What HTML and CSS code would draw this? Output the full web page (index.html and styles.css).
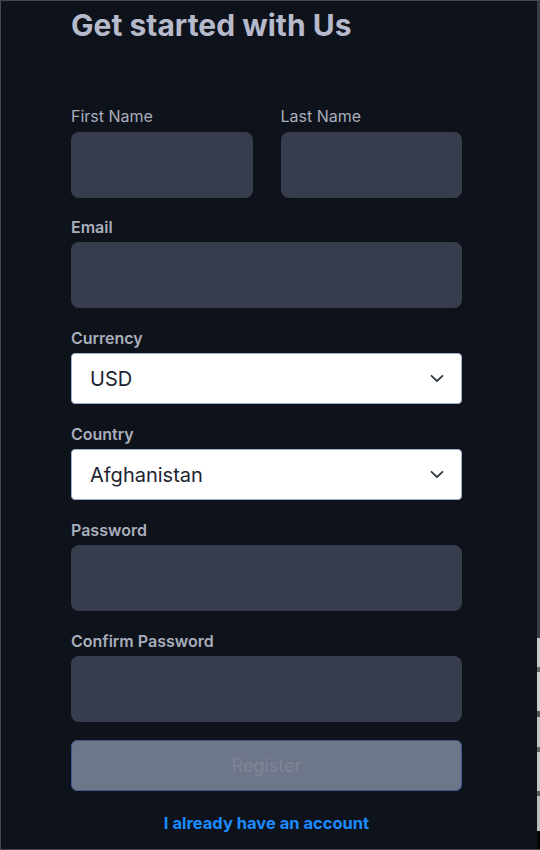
FILE: index.html
```html
<!DOCTYPE html>
<html lang="en">
<head>
<meta charset="utf-8">
<title>Get started with Us</title>
<link rel="stylesheet" href="styles.css">
</head>
<body>
<div class="frame">
  <main class="page">
    <h1 class="title">Get started with Us</h1>
    <form class="form">
      <div class="row">
        <div class="field">
          <label class="label light">First Name</label>
          <div class="input"></div>
        </div>
        <div class="field">
          <label class="label light">Last Name</label>
          <div class="input"></div>
        </div>
      </div>
      <div class="field">
        <label class="label">Email</label>
        <div class="input"></div>
      </div>
      <div class="field">
        <label class="label">Currency</label>
        <div class="select"><span>USD</span>
          <svg class="chev" width="14" height="9" viewBox="0 0 14 9"><path d="M1.5 1.8 L7 7 L12.5 1.8" fill="none" stroke="#343a46" stroke-width="1.8" stroke-linecap="round" stroke-linejoin="round"/></svg>
        </div>
      </div>
      <div class="field">
        <label class="label">Country</label>
        <div class="select"><span>Afghanistan</span>
          <svg class="chev" width="14" height="9" viewBox="0 0 14 9"><path d="M1.5 1.8 L7 7 L12.5 1.8" fill="none" stroke="#343a46" stroke-width="1.8" stroke-linecap="round" stroke-linejoin="round"/></svg>
        </div>
      </div>
      <div class="field">
        <label class="label">Password</label>
        <div class="input"></div>
      </div>
      <div class="field">
        <label class="label">Confirm Password</label>
        <div class="input"></div>
      </div>
      <div class="btn">Register</div>
      <a class="link" href="#">I already have an account</a>
    </form>
  </main>
  <div class="strip"></div>
</div>
</body>
</html>
```
FILE: styles.css
```css
* { box-sizing: border-box; }
html, body { margin: 0; padding: 0; background: #0e121b; }
body { font-family: "Inter", "Noto Sans", sans-serif; }
.frame {
  width: 540px;
  height: 850px;
  display: flex;
  background: #0e121b;
  border-left: 1px solid #46484e;
  border-top: 1px solid #46484e;
  border-bottom: 1px solid #46484e;
  overflow: hidden;
}
.page {
  flex: 1;
  padding-left: 70px;
  padding-right: 75px;
}
.strip {
  width: 3px;
  background: linear-gradient(to bottom,
    #3a3d44 0, #3a3d44 637px,
    #c9c9c9 637px, #c9c9c9 666px,
    #6a6a6a 666px, #6a6a6a 671px,
    #cfcfcf 671px, #cfcfcf 710px,
    #555 710px, #555 716px,
    #c4c4c4 716px, #c4c4c4 746px,
    #666 746px, #666 751px,
    #c8c8c8 751px, #c8c8c8 790px,
    #5a5a5a 790px, #5a5a5a 795px,
    #bdbdbd 795px, #bdbdbd 830px,
    #050505 830px);
}
.title {
  margin: 6px 0 0 0;
  font-size: 30px;
  line-height: 36px;
  font-weight: 700;
  color: #b6bacb;
  letter-spacing: 0;
}
.form {
  display: flex;
  flex-direction: column;
  margin-top: 62px;
}
.row {
  display: flex;
  gap: 28px;
}
.row .field { flex: 1; margin-bottom: 18px; }
.field {
  display: flex;
  flex-direction: column;
  margin-bottom: 19px;
}
.label {
  font-size: 16px;
  line-height: 22px;
  color: #a9aebb;
  font-weight: 600;
  margin-bottom: 4px;
}
.label.light { font-weight: 400; margin-bottom: 5px; }
.input {
  height: 66px;
  background: #373d4c;
  border-radius: 8px;
}
.select {
  height: 51px;
  background: #ffffff;
  border: 1px solid #9fb0cf;
  border-radius: 4px;
  display: flex;
  align-items: center;
  justify-content: space-between;
  padding: 0 17px 0 18px;
  font-size: 20px;
  color: #1e2330;
}
.chev { display: block; }
.btn {
  height: 51px;
  margin-top: -1px;
  background: #6e7689;
  border: 1px solid #40588f;
  border-radius: 6px;
  display: flex;
  align-items: center;
  justify-content: center;
  font-size: 18px;
  color: #7f8596;
}
.link {
  margin-top: 21px;
  text-align: center;
  font-size: 16.5px;
  font-weight: 700;
  color: #1b8cff;
  text-decoration: none;
  line-height: 22px;
}
```
